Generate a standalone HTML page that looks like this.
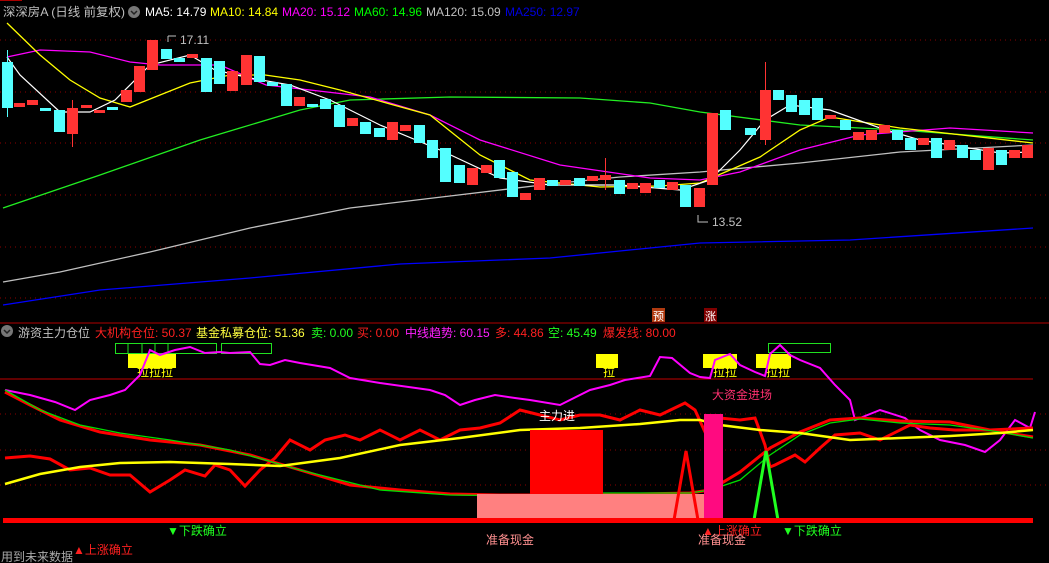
<!DOCTYPE html>
<html><head><meta charset="utf-8">
<style>
html,body{margin:0;padding:0;background:#000;width:1049px;height:563px;overflow:hidden}
svg{display:block}
text{font-family:"Liberation Sans","Noto Sans CJK SC",sans-serif;font-size:12px}
.r{fill:#ff3333}.c{fill:#54ffff}
</style></head><body>
<svg width="1049" height="563" viewBox="0 0 1049 563" xmlns="http://www.w3.org/2000/svg">
<rect width="1049" height="563" fill="#000"/>
<line x1="0" y1="0.5" x2="22" y2="0.5" stroke="#a00"/>
<g stroke="#8b0000" stroke-dasharray="1,4">
<line x1="0" y1="40" x2="1049" y2="40"/><line x1="0" y1="92" x2="1049" y2="92"/>
<line x1="0" y1="143" x2="1049" y2="143"/><line x1="0" y1="195" x2="1049" y2="195"/>
<line x1="0" y1="247" x2="1049" y2="247"/><line x1="0" y1="298" x2="1049" y2="298"/>
<line x1="0" y1="414" x2="1049" y2="414"/><line x1="0" y1="450" x2="1049" y2="450"/><line x1="0" y1="485" x2="1049" y2="485"/>
</g>
<line x1="0" y1="323" x2="1049" y2="323" stroke="#b00000"/>
<line x1="0" y1="379" x2="1033" y2="379" stroke="#c00000"/>
<text x="3" y="16" fill="#c0c0c0" textLength="122" lengthAdjust="spacingAndGlyphs">深深房A (日线 前复权)</text>
<circle cx="134" cy="12" r="6" fill="#777"/><path d="M131 11l3 3 3-3" stroke="#222" fill="none" stroke-width="1.5"/>
<text x="145" y="16" fill="#fff">MA5: 14.79</text>
<text x="210" y="16" fill="#ff0">MA10: 14.84</text>
<text x="282" y="16" fill="#f0f">MA20: 15.12</text>
<text x="354" y="16" fill="#0f0">MA60: 14.96</text>
<text x="426" y="16" fill="#c0c0c0">MA120: 15.09</text>
<text x="505" y="16" fill="#0000e0">MA250: 12.97</text>
<polyline fill="none" stroke="#0000ff" stroke-width="1.3" points="3,305 100,290 250,278 400,264 550,258 700,243 850,240 1033,228"/>
<polyline fill="none" stroke="#c0c0c0" stroke-width="1.3" points="3,282 60,272 150,252 250,228 350,208 450,196 550,184 620,177 700,172 800,163 900,152 1033,145"/>
<polyline fill="none" stroke="#22ee22" stroke-width="1.3" points="3,208 100,175 200,140 300,110 350,100 450,97 580,98 650,103 700,112 800,125 900,130 1033,140"/>
<polyline fill="none" stroke="#ff00ff" stroke-width="1.3" points="7,57 40,50 90,52 130,62 160,65 220,65 266,85 310,90 370,97 430,115 480,140 560,165 650,178 700,180 740,172 800,150 860,135 950,128 1033,133"/>
<polyline fill="none" stroke="#ffff00" stroke-width="1.3" points="7,23 40,55 70,80 100,98 130,107 160,95 190,83 230,75 265,75 300,80 340,90 390,104 430,115 480,155 530,180 600,187 660,186 700,183 760,157 800,130 830,117 900,128 1033,143"/>
<polyline fill="none" stroke="#ffffff" stroke-width="1.2" points="7,57 20,75 60,112 90,112 115,100 150,65 190,55 215,70 250,78 290,85 330,100 380,125 440,150 500,178 550,185 620,185 680,190 710,180 740,150 765,120 790,105 830,110 880,128 920,140 1000,153 1033,152"/>
<g>
<rect class="c" x="2" y="62" width="11" height="46"/><line x1="7.5" y1="50" x2="7.5" y2="117" stroke="#54ffff"/>
<rect class="r" x="14" y="103" width="11" height="4"/><rect class="r" x="27" y="100" width="11" height="5"/>
<rect class="c" x="40" y="108" width="11" height="3"/><rect class="c" x="54" y="110" width="11" height="22"/>
<rect class="r" x="67" y="108" width="11" height="26"/><line x1="72.5" y1="100" x2="72.5" y2="147" stroke="#ff3333"/>
<rect class="r" x="81" y="105" width="11" height="3"/><rect class="r" x="94" y="110" width="11" height="3"/>
<rect class="c" x="107" y="107" width="11" height="3"/><rect class="r" x="121" y="90" width="11" height="12"/>
<rect class="r" x="134" y="66" width="11" height="26"/><rect class="r" x="147" y="40" width="11" height="30"/>
<rect class="c" x="161" y="49" width="11" height="10"/><rect class="c" x="174" y="58" width="11" height="4"/>
<rect class="r" x="187" y="54" width="11" height="4"/><rect class="c" x="201" y="58" width="11" height="34"/>
<rect class="c" x="214" y="61" width="11" height="23"/><rect class="r" x="227" y="71" width="11" height="20"/>
<rect class="r" x="241" y="55" width="11" height="30"/><rect class="c" x="254" y="56" width="11" height="26"/>
<rect class="c" x="267" y="82" width="11" height="4"/><rect class="c" x="281" y="84" width="11" height="22"/>
<rect class="r" x="294" y="97" width="11" height="9"/><rect class="c" x="307" y="104" width="11" height="3"/>
<rect class="c" x="320" y="99" width="11" height="10"/><rect class="c" x="334" y="105" width="11" height="22"/>
<rect class="r" x="347" y="118" width="11" height="8"/><rect class="c" x="360" y="122" width="11" height="12"/>
<rect class="c" x="374" y="128" width="11" height="9"/><rect class="r" x="387" y="122" width="11" height="18"/>
<rect class="r" x="400" y="125" width="11" height="6"/><rect class="c" x="414" y="125" width="11" height="18"/>
<rect class="c" x="427" y="140" width="11" height="18"/><rect class="c" x="440" y="148" width="11" height="34"/>
<rect class="c" x="454" y="165" width="11" height="18"/><rect class="r" x="467" y="168" width="11" height="17"/>
<rect class="r" x="481" y="165" width="11" height="8"/><rect class="c" x="494" y="160" width="11" height="18"/>
<rect class="c" x="507" y="172" width="11" height="25"/><rect class="r" x="520" y="193" width="11" height="7"/>
<rect class="r" x="534" y="178" width="11" height="12"/><rect class="c" x="547" y="180" width="11" height="6"/>
<rect class="r" x="560" y="180" width="11" height="5"/><rect class="c" x="574" y="178" width="11" height="8"/>
<rect class="r" x="587" y="176" width="11" height="5"/><rect class="r" x="600" y="175" width="11" height="5"/>
<line x1="605.5" y1="158" x2="605.5" y2="190" stroke="#ff3333"/>
<rect class="c" x="614" y="180" width="11" height="14"/><rect class="r" x="627" y="183" width="11" height="6"/>
<rect class="r" x="640" y="183" width="11" height="10"/><rect class="c" x="654" y="180" width="11" height="8"/>
<rect class="r" x="667" y="182" width="11" height="8"/><rect class="c" x="680" y="185" width="11" height="22"/>
<rect class="r" x="694" y="188" width="11" height="19"/>
<rect class="r" x="707" y="113" width="11" height="72"/><rect class="c" x="720" y="110" width="11" height="20"/>
<rect class="c" x="745" y="128" width="11" height="7"/>
<rect class="r" x="760" y="90" width="11" height="50"/><line x1="765.5" y1="62" x2="765.5" y2="145" stroke="#ff3333"/>
<rect class="c" x="773" y="90" width="11" height="10"/><rect class="c" x="786" y="95" width="11" height="17"/>
<rect class="c" x="799" y="100" width="11" height="15"/><rect class="c" x="812" y="98" width="11" height="22"/>
<rect class="r" x="825" y="115" width="11" height="4"/><rect class="c" x="840" y="120" width="11" height="10"/>
<rect class="r" x="853" y="132" width="11" height="8"/><rect class="r" x="866" y="130" width="11" height="10"/>
<rect class="r" x="879" y="125" width="11" height="8"/><rect class="c" x="892" y="130" width="11" height="10"/>
<rect class="c" x="905" y="138" width="11" height="12"/><rect class="r" x="918" y="138" width="11" height="7"/>
<rect class="c" x="931" y="138" width="11" height="20"/><rect class="r" x="944" y="140" width="11" height="10"/>
<rect class="c" x="957" y="145" width="11" height="13"/><rect class="c" x="970" y="150" width="11" height="10"/>
<rect class="r" x="983" y="148" width="11" height="22"/><rect class="c" x="996" y="150" width="11" height="15"/>
<rect class="r" x="1009" y="150" width="11" height="8"/><rect class="r" x="1022" y="145" width="11" height="13"/>
</g>
<text x="180" y="44" fill="#c0c0c0">17.11</text><path d="M168 36h8M168 36v6" stroke="#c0c0c0" fill="none"/>
<text x="712" y="226" fill="#c0c0c0">13.52</text><path d="M698 215v7h10" stroke="#c0c0c0" fill="none"/>
<rect x="652" y="308" width="13" height="14" fill="#b03a10"/><text x="653" y="320" fill="#fff" style="font-size:11px">预</text>
<rect x="704" y="308" width="13" height="14" fill="#800000"/><text x="705" y="320" fill="#fff" style="font-size:11px">涨</text>
<circle cx="7" cy="331" r="6" fill="#777"/><path d="M4 330l3 3 3-3" stroke="#222" fill="none" stroke-width="1.5"/>
<text x="18" y="337" fill="#c0c0c0">游资主力仓位</text>
<text x="95" y="337" fill="#ff2020">大机构仓位: 50.37</text>
<text x="196" y="337" fill="#ffff40">基金私募仓位: 51.36</text>
<text x="311" y="337" fill="#20ff20">卖: 0.00</text>
<text x="357" y="337" fill="#ff2020">买: 0.00</text>
<text x="405" y="337" fill="#ff20ff">中线趋势: 60.15</text>
<text x="495" y="337" fill="#ff2020">多: 44.86</text>
<text x="548" y="337" fill="#20ff20">空: 45.49</text>
<text x="603" y="337" fill="#ff2020">爆发线: 80.00</text>
<g fill="none" stroke="#20e020">
<rect x="115.5" y="343.5" width="101" height="10"/><line x1="128" y1="343" x2="128" y2="353"/><line x1="142" y1="343" x2="142" y2="353"/><line x1="155" y1="343" x2="155" y2="353"/><line x1="168" y1="343" x2="168" y2="353"/>
<rect x="221.5" y="343.5" width="50" height="10"/><rect x="768.5" y="343.5" width="62" height="9"/>
</g>
<g fill="#ffff00"><rect x="128" y="354" width="48" height="14"/><rect x="596" y="354" width="22" height="14"/><rect x="703" y="354" width="34" height="14"/><rect x="756" y="354" width="35" height="14"/></g>
<g fill="#ffff00"><text x="137" y="376">拉拉拉</text><text x="603" y="376">拉</text><text x="713" y="376">拉拉</text><text x="766" y="376">拉拉</text></g>
<polyline fill="none" stroke="#ff00ff" stroke-width="2" points="5,390 30,395 55,402 75,410 90,400 110,395 125,390 140,375 150,350 160,355 175,350 190,347 205,353 220,352 230,353 250,352 260,364 270,365 285,360 300,363 330,368 350,378 380,383 430,390 445,395 460,405 475,400 495,395 515,398 530,400 560,405 590,390 610,385 625,380 650,376 660,357 672,358 690,373 700,377 710,378 715,360 730,354 740,365 755,372 765,376 770,354 780,345 790,355 800,360 820,368 835,385 850,400 855,420 880,410 905,418 920,430 940,440 965,445 985,452 1000,440 1015,420 1030,428 1035,412"/>
<polyline fill="none" stroke="#ff0000" stroke-width="3" points="5,458 30,456 50,459 70,470 90,468 110,475 130,475 150,492 170,480 185,470 205,476 215,465 230,470 245,486 260,470 275,458 290,440 310,450 325,440 345,435 360,440 380,430 400,440 420,430 440,440 460,430 480,428 500,423 520,410 540,415 560,420 580,415 600,415 620,420 640,410 660,415 685,403 695,410 705,432 720,418 740,420 755,418 765,445 770,467 775,465 795,455 805,462 820,448 835,435 860,433 880,440 910,425 930,428 955,430 990,430 1033,428"/>
<polyline fill="none" stroke="#ff0000" stroke-width="3" points="5,392 30,405 60,420 100,432 150,440 200,445 250,455 300,470 350,485 400,490 450,494 500,495 560,495 640,494 690,493 710,490 740,472 770,448 800,432 830,420 860,418 900,421 950,422 990,430 1033,437"/>
<polyline fill="none" stroke="#00dd00" stroke-width="1.3" points="5,390 40,410 80,425 120,433 170,440 230,450 300,470 380,490 450,495 530,496 600,493 690,493 710,490 740,480 770,455 800,435 830,423 860,419 900,423 950,425 1000,432 1033,438"/>
<polyline fill="none" stroke="#ffff00" stroke-width="2.5" points="5,484 40,474 80,467 120,463 170,462 230,464 280,466 340,458 400,445 460,438 520,430 580,428 640,424 680,420 700,420 720,425 760,430 800,433 850,440 900,438 950,436 1000,433 1033,430"/>
<rect x="477" y="494" width="231" height="26" fill="#ff8080"/>
<rect x="530" y="430" width="73" height="64" fill="#ff0000"/>
<rect x="704" y="414" width="19" height="106" fill="#ff0a80"/>
<text x="539" y="420" fill="#fff">主力进</text>
<text x="712" y="399" fill="#ff3070">大资金进场</text>
<polyline fill="none" stroke="#ff0000" stroke-width="3" points="674,520 686,451 698,520"/>
<polyline fill="none" stroke="#20ff20" stroke-width="3" points="754,520 766,451 778,520"/>
<rect x="676" y="518" width="22" height="4" fill="#20ff20"/>
<rect x="3" y="518" width="1030" height="5" fill="#ff0000"/>
<text x="167" y="535" fill="#20ff20">▼下跌确立</text>
<text x="782" y="535" fill="#20ff20">▼下跌确立</text>
<text x="73" y="554" fill="#ff2020">▲上涨确立</text>
<text x="702" y="535" fill="#ff2020">▲上涨确立</text>
<text x="486" y="544" fill="#ff9090">准备现金</text>
<text x="698" y="544" fill="#ff9090">准备现金</text>
<text x="1" y="561" fill="#aaa">用到未来数据</text>
</svg>
</body></html>
